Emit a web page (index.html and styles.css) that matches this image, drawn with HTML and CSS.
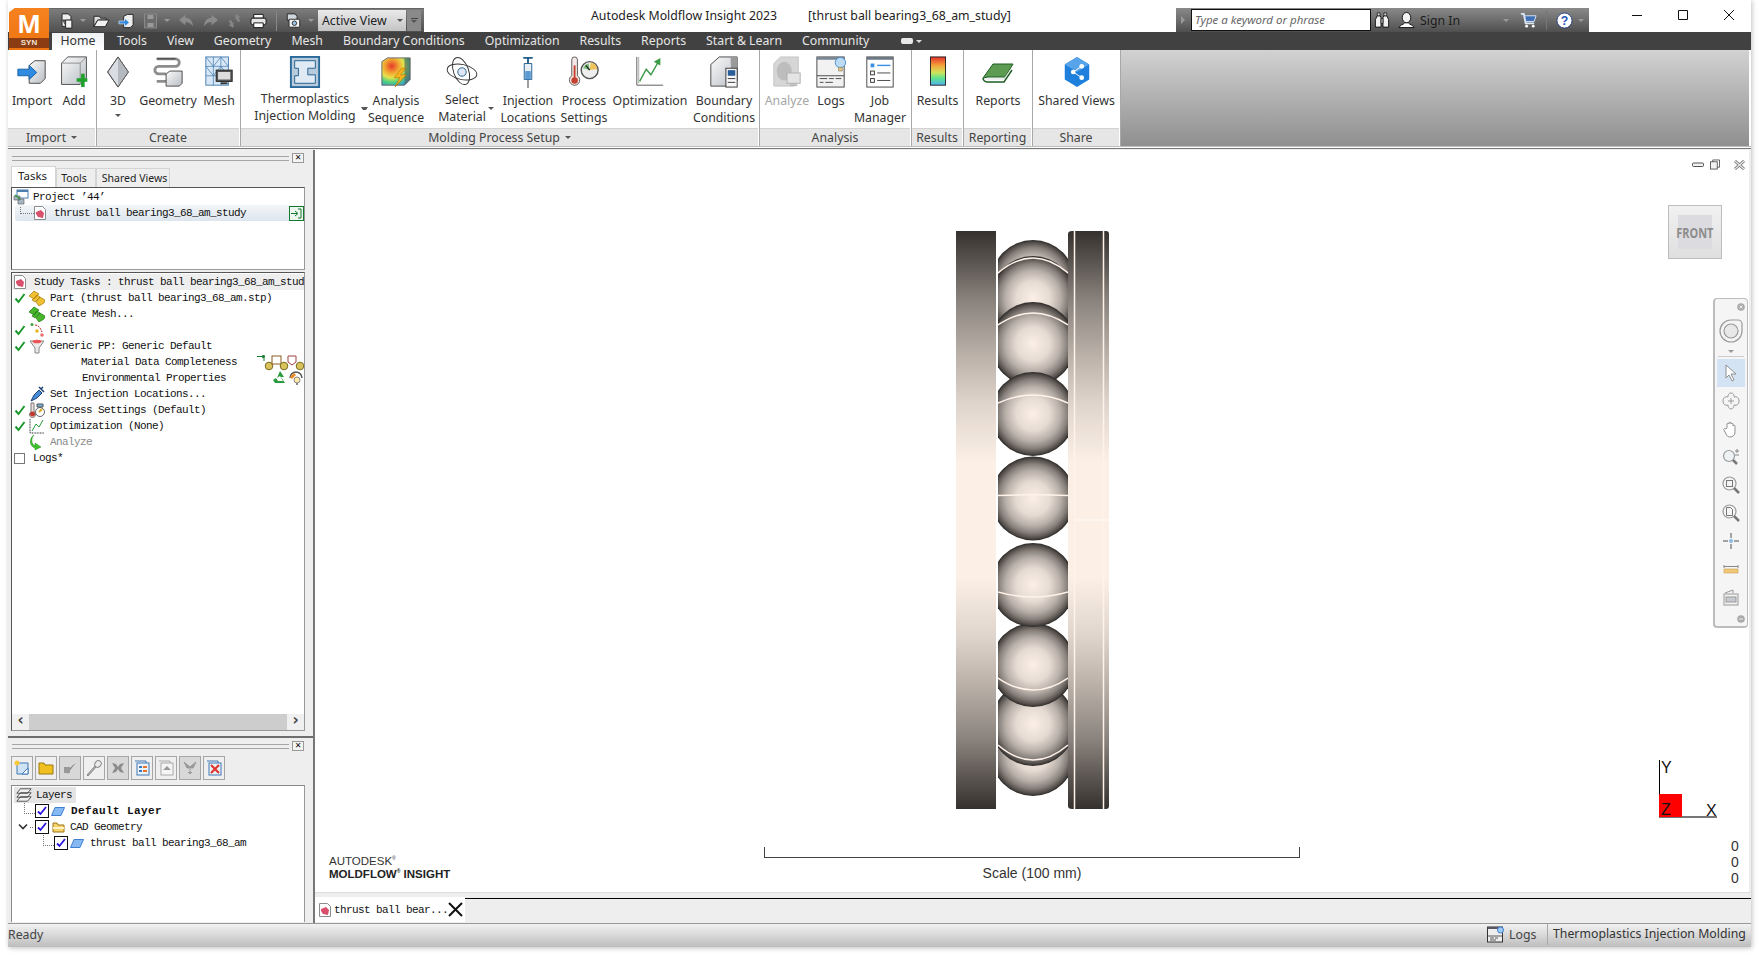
FILE: index.html
```html
<!DOCTYPE html>
<html lang="en">
<head>
<meta charset="utf-8">
<title>Autodesk Moldflow Insight 2023</title>
<link rel="stylesheet" href="styles.css">
</head>
<body>
<svg class="defs" width="0" height="0">
  <defs>
    <linearGradient id="ringGrad" x1="0" y1="0" x2="0" y2="1">
      <stop offset="0" stop-color="#35312e"/><stop offset=".06" stop-color="#5f5955"/><stop offset=".12" stop-color="#8a837d"/><stop offset=".22" stop-color="#bdb3ab"/><stop offset=".3" stop-color="#e0d5cc"/><stop offset=".4" stop-color="#fbefe6"/><stop offset=".6" stop-color="#fbefe6"/><stop offset=".7" stop-color="#e0d5cc"/><stop offset=".78" stop-color="#bdb3ab"/><stop offset=".88" stop-color="#8a837d"/><stop offset=".94" stop-color="#5f5955"/><stop offset="1" stop-color="#35312e"/>
    </linearGradient>
    <radialGradient id="ballGrad">
      <stop offset="0" stop-color="#fbefe8"/><stop offset=".4" stop-color="#e6dbd3"/><stop offset=".65" stop-color="#b9b0a9"/><stop offset=".82" stop-color="#87807b"/><stop offset=".94" stop-color="#534e4a"/><stop offset="1" stop-color="#2a2725"/>
    </radialGradient>
    <clipPath id="ballClip"><rect x="998" y="225" width="70" height="590"/></clipPath>
    <linearGradient id="boxGrad" x1="0" y1="0" x2="1" y2="1"><stop offset="0" stop-color="#fafafa"/><stop offset="1" stop-color="#b9bec4"/></linearGradient>
    <linearGradient id="rainbow" x1="0" y1="0" x2="0" y2="1"><stop offset="0" stop-color="#e5312b"/><stop offset=".3" stop-color="#f2a33a"/><stop offset=".55" stop-color="#cfe35a"/><stop offset=".75" stop-color="#5fe38d"/><stop offset="1" stop-color="#4fb2f0"/></linearGradient>
    <radialGradient id="contour" cx=".35" cy=".3" r=".85"><stop offset="0" stop-color="#e43b2a"/><stop offset=".3" stop-color="#f3a531"/><stop offset=".5" stop-color="#e8e24c"/><stop offset=".7" stop-color="#52d07f"/><stop offset="1" stop-color="#2f8fe0"/></radialGradient>
    <symbol id="doc" viewBox="0 0 12 14"><path d="M.5.5h8l3 3v10H.5z" fill="#fff" stroke="#8c8c8c"/><path d="M2 6l5-2 3 3-1 5-5-1-2-3z" fill="#d8506c"/></symbol>
    <symbol id="chk" viewBox="0 0 12 12"><path d="M1.500 6.500l3 3.500 6-8" fill="none" stroke="#1c9a2f" stroke-width="2"/></symbol>
    <symbol id="lay" viewBox="0 0 14 9"><path d="M4 .5h9.500L10 8.500H.5z" fill="#86b8f2" stroke="#3f7fd0"/></symbol>
    <symbol id="cb" viewBox="0 0 14 14"><rect x=".5" y=".5" width="13" height="13" fill="#fff" stroke="#111"/><path d="M3 7.500l2.500 2.500 5.500-7" fill="none" stroke="#2a12e0" stroke-width="1.800"/></symbol>
  </defs>
</svg>

<div class="window">
  <div class="app-logo"><span class="app-m">M</span><span class="app-syn">SYN</span></div>

  <header class="titlebar">
    <div class="qat">
      <svg class="q q1" viewBox="0 0 16 18"><path d="M3 1h7l3 3v4H3z" fill="#eee" stroke="#222"/><path d="M7 8h7v9H7zM3 8v7h4" fill="#f4f4f4" stroke="#222"/></svg>
      <i class="caret q2"></i>
      <svg class="q q3" viewBox="0 0 18 14"><path d="M1 2h6l1 2h6v2H5L1 13z" fill="#ddd" stroke="#222"/><path d="M5 6h12l-4 7H1z" fill="#f2f2f2" stroke="#222"/></svg>
      <svg class="q q4" viewBox="0 0 18 16"><path d="M6 3l4-2h6v11l-3 3H6z" fill="#eee" stroke="#222"/><path d="M1 8h6V5l5 4.500-5 4.500v-3H1z" fill="#2f86dd" stroke="#fff" stroke-width=".6"/></svg>
      <svg class="q q5" viewBox="0 0 14 16"><path d="M1 1h12v14H1z" fill="#6c6c6c" stroke="#8a8a8a"/><path d="M4 2h6v4H4zM4 10h6v4H4z" fill="#9a9a9a"/></svg>
      <i class="caret q6"></i>
      <svg class="q q7" viewBox="0 0 16 14"><path d="M7 1L1 6l6 5V8c3 0 5 1 7 4 0-5-3-8-7-8z" fill="#8b8b8b"/></svg>
      <svg class="q q8" viewBox="0 0 16 14"><path d="M9 1l6 5-6 5V8C6 8 4 9 2 12c0-5 3-8 7-8z" fill="#8b8b8b"/></svg>
      <svg class="q q9" viewBox="0 0 16 16"><path d="M9 1l5 3-2 1 2 3-3 1-1-3-1 1zM7 15L2 12l2-1-2-3 3-1 1 3 1-1z" fill="#858585"/></svg>
      <svg class="q q10" viewBox="0 0 18 16"><path d="M4 1h10v4H4z" fill="#fff" stroke="#111"/><rect x="1" y="5" width="16" height="7" rx="2" fill="#e6e6e6" stroke="#111"/><path d="M4 10h10v5H4z" fill="#fff" stroke="#111"/></svg>
      <i class="qsep"></i>
      <svg class="q q11" viewBox="0 0 16 18"><path d="M1 1h9l2 3v4H1z" fill="#cfd6dc" stroke="#222"/><rect x="3" y="7" width="12" height="9" rx="1" fill="#f3f3f3" stroke="#222"/><circle cx="9" cy="11.500" r="2.500" fill="#9fc6ea" stroke="#222"/></svg>
      <i class="caret q12"></i>
      <div class="combo"><span>Active View</span><i class="caret dark"></i></div>
      <div class="overflow"><i></i><i class="caret dark"></i></div>
    </div>
    <div class="title"><span>Autodesk Moldflow Insight 2023</span><span>[thrust ball bearing3_68_am_study]</span></div>
    <div class="searchbar">
      <i class="tri"></i>
      <div class="search-input">Type a keyword or phrase</div>
      <svg class="s-bino" viewBox="0 0 16 18"><path d="M3 4h3l1 2v10H1V8zM10 4h3l2 4v8H9V6z" fill="#f2f2f2" stroke="#111"/><path d="M3 1h3v3H3zM10 1h3v3h-3zM7 7h2v5H7z" fill="#ddd" stroke="#111" stroke-width=".8"/></svg>
      <svg class="s-user" viewBox="0 0 18 18"><ellipse cx="9" cy="6.500" rx="4.500" ry="5.500" fill="#f2f2f2" stroke="#111"/><path d="M1 17c1-3 5-3 6-5h4c1 2 5 2 6 5z" fill="#fff" stroke="#111"/></svg>
      <span class="signin">Sign In</span>
      <i class="caret s-c1"></i>
      <svg class="s-cart" viewBox="0 0 18 18"><path d="M1 2h3l2 10h9" fill="none" stroke="#dbe7f5" stroke-width="2"/><path d="M5 4h12l-2 6H6z" fill="#3f70b5" stroke="#dbe7f5"/><circle cx="7" cy="15" r="1.500" fill="#fff"/><circle cx="14" cy="15" r="1.500" fill="#fff"/></svg>
      <i class="s-sep"></i>
      <svg class="s-help" viewBox="0 0 18 18"><circle cx="9" cy="9" r="8" fill="#fff" stroke="#263f7c"/><text x="9" y="13.500" text-anchor="middle" class="help-q">?</text></svg>
      <i class="caret s-c2"></i>
    </div>
    <div class="winbtns">
      <svg viewBox="0 0 12 12"><path d="M1 6.500h10" stroke="#111"/></svg>
      <svg viewBox="0 0 12 12"><path d="M1.500 1.500h9v9h-9z" fill="none" stroke="#111"/></svg>
      <svg viewBox="0 0 12 12"><path d="M1 1l10 10M11 1L1 11" stroke="#111"/></svg>
    </div>
  </header>

  <nav class="tabs">
    <span class="tab active">Home</span>
    <span class="tab">Tools</span>
    <span class="tab">View</span>
    <span class="tab">Geometry</span>
    <span class="tab">Mesh</span>
    <span class="tab">Boundary Conditions</span>
    <span class="tab">Optimization</span>
    <span class="tab">Results</span>
    <span class="tab">Reports</span>
    <span class="tab">Start &amp; Learn</span>
    <span class="tab">Community</span>
    <span class="tab-min"><i></i><i class="caret light"></i></span>
  </nav>

  <section class="ribbon">
    <div class="panel p-import">
      <div class="pbody">
        <div class="rb w48"><svg class="ri" viewBox="0 0 34 32"><path d="M14 9l6-5h11v19l-5 5H14z" fill="url(#boxGrad)" stroke="#444"/><path d="M2 13h12V9l8 7.500-8 7.500v-4H2z" fill="#2f8be0" stroke="#135fa8"/></svg><span>Import</span></div>
        <div class="rb w36"><svg class="ri" viewBox="0 0 30 36"><path d="M1 8l7-7h21v24l-7 7H1z" fill="url(#boxGrad)" stroke="#444"/><path d="M1 8h21v24M22 8l7-7" fill="none" stroke="#888"/><path d="M18 25h5v-5h4v5h3v4h-3v6h-4v-6h-5z" fill="#1ea02c"/></svg><span>Add</span></div>
      </div>
      <div class="plabel">Import <i class="caret dark"></i></div>
    </div>
    <div class="panel p-create">
      <div class="pbody">
        <div class="rb w42"><svg class="ri" viewBox="0 0 26 34"><path d="M13 1l11 16-11 16L2 17z" fill="#d9dde2" stroke="#555"/><path d="M13 1l11 16-11 16z" fill="#b4b9c0"/><path d="M13 1l11 16-11 16L2 17z" fill="none" stroke="#555"/></svg><span>3D</span><i class="caret dark below"></i></div>
        <div class="rb w58"><svg class="ri" viewBox="0 0 32 34"><path d="M4 3h20a3 3 0 0 1 0 8H6a3 3 0 0 0 0 8h8M4 27h10" fill="none" stroke="#8d8d8d" stroke-width="3"/><path d="M4 3h20" fill="none" stroke="#333"/><path d="M14 19l4-3h13v13l-3 3H14z" fill="url(#boxGrad)" stroke="#444"/></svg><span>Geometry</span></div>
        <div class="rb w44"><svg class="ri" viewBox="0 0 30 34"><rect x="1" y="1" width="24" height="30" fill="#d8e8f6" stroke="#4a7fb0"/><path d="M1 11h24M1 21h24M9 1v30M17 1v30M1 1l8 10 8-10 8 10M1 11l8 10 8-10 8 10" fill="none" stroke="#4a7fb0" stroke-width=".8"/><rect x="12" y="15" width="17" height="12" fill="#555" stroke="#222"/><rect x="14" y="17" width="13" height="8" fill="#ddd"/><path d="M17 28h7v2h-7z" fill="#333"/></svg><span>Mesh</span></div>
      </div>
      <div class="plabel">Create</div>
    </div>
    <div class="panel p-mold">
      <div class="pbody">
        <div class="rb w110 up"><svg class="ri" viewBox="0 0 32 34"><rect x="1" y="1" width="30" height="32" fill="#b7cbdd" stroke="#2a6a9a" stroke-width="2"/><path d="M5 5h22v8h-8v7h8v9H5v-8h4v-8H5z" fill="#dfeaf4" stroke="#1f5d8c"/></svg><span>Thermoplastics</span><span>Injection Molding</span></div>
        <i class="caret dark rb-arrow"></i>
        <div class="rb w56"><svg class="ri" viewBox="0 0 32 34"><path d="M1 6l6-4h24v23l-6 6H1z" fill="url(#contour)" stroke="#666"/><path d="M25 2l6 0v23l-6 6z" fill="#555" opacity=".55"/><path d="M22 13l-8 10h6l-5 10 12-13h-6l5-7z" fill="#f7b21d" stroke="#a96c00" stroke-width=".6"/></svg><span>Analysis</span><span>Sequence</span></div>
        <div class="rb w76 has-arrow up1"><svg class="ri" viewBox="0 0 34 34"><ellipse cx="17" cy="17" rx="16" ry="8" transform="rotate(12 17 17)" fill="none" stroke="#333"/><ellipse cx="16" cy="16" rx="8" ry="15" transform="rotate(-20 16 16)" fill="none" stroke="#333"/><circle cx="17" cy="17" r="4.500" fill="#dfe8f2" stroke="#1f5d8c"/></svg><span>Select</span><span>Material</span></div>
        <div class="rb w56"><svg class="ri" viewBox="0 0 16 34"><path d="M3 2h10M8 2v6" stroke="#1f5d8c" stroke-width="2"/><path d="M4 8h8v17H4z" fill="#e7eef5" stroke="#1f5d8c"/><path d="M5 16h6v9H5z" fill="#5b9bd5"/><path d="M8 25v9" stroke="#333"/></svg><span>Injection</span><span>Locations</span></div>
        <div class="rb w56"><svg class="ri" viewBox="0 0 34 34"><path d="M4 4a3 3 0 0 1 6 0v17a5.500 5.500 0 1 1-6 0z" fill="#f4e9e6" stroke="#555"/><circle cx="7" cy="26" r="3.500" fill="#c4402f"/><path d="M6 10h2v14H6z" fill="#c4402f"/><circle cx="23" cy="15" r="9" fill="#eee" stroke="#555" stroke-width="1.500"/><path d="M16 13a8 8 0 0 1 6-5l1 7z" fill="#7cc47c"/><path d="M24 7a8 8 0 0 1 7 7l-8 1z" fill="#eec35c"/><path d="M23 15l-4-5" stroke="#222" stroke-width="1.500"/></svg><span>Process</span><span>Settings</span></div>
        <div class="rb w76"><svg class="ri" viewBox="0 0 30 34"><path d="M1 1v30h28" fill="none" stroke="#555"/><path d="M3 1v28" stroke="#aaa"/><path d="M4 27l7-13 5 6 8-14" fill="none" stroke="#3d9a46" stroke-width="1.500"/><path d="M19 6l7-4 0 8z" fill="#3d9a46"/></svg><span>Optimization</span></div>
        <div class="rb w72"><svg class="ri" viewBox="0 0 30 34"><path d="M1 9l9-8h19v25l-6 6H1z" fill="url(#boxGrad)" stroke="#444"/><path d="M22 1l7 0v25l-6 6z" fill="#9a9a9a"/><rect x="17" y="13" width="12" height="20" fill="#f8f8f8" stroke="#333"/><rect x="19" y="15" width="8" height="6" fill="#2a5f9a"/><path d="M19 24h8M19 28h8" stroke="#333"/></svg><span>Boundary</span><span>Conditions</span></div>
      </div>
      <div class="plabel">Molding Process Setup <i class="caret dark"></i></div>
    </div>
    <div class="panel p-analysis">
      <div class="pbody">
        <div class="rb w54 off"><svg class="ri" viewBox="0 0 30 34"><path d="M1 8l7-7h19v26l-5 5H1z" fill="#d6d6d6" stroke="#c4c4c4"/><ellipse cx="12" cy="16" rx="8" ry="10" fill="#bdbdbd"/><rect x="15" y="18" width="14" height="11" fill="#e4e4e4" stroke="#b0b0b0"/><path d="M18 31h8" stroke="#bbb" stroke-width="2"/></svg><span>Analyze</span></div>
        <div class="rb w34"><svg class="ri" viewBox="0 0 32 34"><rect x="1" y="1" width="29" height="32" fill="#f2f2f2" stroke="#444"/><path d="M1 1h29v3H1z" fill="#7b8794"/><path d="M1 21h29" stroke="#444"/><path d="M4 24h8M14 24h5M21 24h6M4 28h4M10 28h8" stroke="#444"/><circle cx="26" cy="7" r="5.500" fill="#bcdcf6" stroke="#4a8bcb"/><path d="M24 12h4v4h-4z" fill="#e8c877" stroke="#666" stroke-width=".5"/></svg><span>Logs</span></div>
        <div class="rb w64"><svg class="ri" viewBox="0 0 30 34"><rect x="1" y="1" width="28" height="32" fill="#fff" stroke="#444"/><path d="M1 1h28v3H1z" fill="#6d7884"/><rect x="5" y="8" width="4" height="4" fill="#3a8fe6"/><path d="M12 10h14" stroke="#3a8fe6" stroke-width="1.500"/><rect x="5" y="16" width="4" height="4" fill="#fff" stroke="#333"/><path d="M12 18h14" stroke="#444"/><rect x="5" y="24" width="4" height="4" fill="#fff" stroke="#333"/><path d="M12 26h14" stroke="#444"/></svg><span>Job</span><span>Manager</span></div>
      </div>
      <div class="plabel">Analysis</div>
    </div>
    <div class="panel p-results">
      <div class="pbody">
        <div class="rb wfull"><svg class="ri" viewBox="0 0 18 34"><rect x="1" y="1" width="16" height="30" fill="url(#rainbow)" stroke="#222"/></svg><span>Results</span></div>
      </div>
      <div class="plabel">Results</div>
    </div>
    <div class="panel p-reporting">
      <div class="pbody">
        <div class="rb wfull"><svg class="ri" viewBox="0 0 32 32"><path d="M1 22L11 8h20l-8 13H6z" fill="#5d9a52" stroke="#1e5e22"/><path d="M1 22c0 2 2 4 4 4h17l8-12" fill="none" stroke="#1e5e22" stroke-width="1.500"/><path d="M5 23h17l7-10" fill="none" stroke="#ddd"/></svg><span>Reports</span></div>
      </div>
      <div class="plabel">Reporting</div>
    </div>
    <div class="panel p-share">
      <div class="pbody">
        <div class="rb wfull"><svg class="ri" viewBox="0 0 30 34"><path d="M15 1l13 8v16l-13 8-13-8V9z" fill="#1e7fdc"/><path d="M15 1l13 8-13 8-13-8z" fill="#57a4ea"/><circle cx="20" cy="11" r="2.500" fill="#fff"/><circle cx="11" cy="17" r="2.500" fill="#fff"/><circle cx="20" cy="23" r="2.500" fill="#fff"/><path d="M20 11l-9 6 9 6" fill="none" stroke="#fff"/></svg><span>Shared Views</span></div>
      </div>
      <div class="plabel">Share</div>
    </div>
    <div class="ribbon-rest"></div>
  </section>
  <div class="ribbon-foot"></div>

  <main class="main">
    <aside class="left">
      <section class="dock dock-top">
        <div class="handle"><i class="grip"></i><b class="closex">✕</b></div>
        <div class="dtabs"><span class="dtab on">Tasks</span><span class="dtab d2">Tools</span><span class="dtab d3">Shared Views</span></div>
        <div class="tree project">
          <div class="row r-proj">
            <svg class="ic16" viewBox="0 0 16 16"><rect x="4" y="1" width="11" height="8" fill="#fff" stroke="#4a7fb0"/><path d="M4 1h11v2H4z" fill="#4a7fb0"/><path d="M1 7h6v4H1zM5 10h6v5H5z" fill="#a9b7c4" stroke="#555" stroke-width=".6"/><path d="M2 6l5 4" stroke="#2d9a3a" stroke-width="1.500"/></svg>
            <span>Project ’44’</span>
          </div>
          <div class="row r-study">
            <i class="dots"></i>
            <svg class="doc" width="12" height="14"><use href="#doc"/></svg>
            <span>thrust ball bearing3_68_am_study</span>
            <svg class="endico" viewBox="0 0 15 15"><rect x=".5" y=".5" width="14" height="14" fill="#eef6ef" stroke="#137a2d"/><path d="M2 7.500h6M6 5l3 2.500L6 10" fill="none" stroke="#137a2d"/><path d="M9 3h3v9H9" fill="none" stroke="#137a2d"/></svg>
          </div>
        </div>
        <div class="tree tasks">
          <div class="row r-head">
            <svg class="doc" width="12" height="14"><use href="#doc"/></svg>
            <span>Study Tasks : thrust ball bearing3_68_am_stud</span>
          </div>
          <div class="row t"><svg class="ck"><use href="#chk"/></svg><svg class="ic16" viewBox="0 0 16 16"><path d="M0 6l5-5 5 3-5 5zM3 10l5-5 3 2-5 5zM7 12l4-5 5 3-1 3-5 3z" fill="#f0c030" stroke="#a87d10" stroke-width=".7"/></svg><span>Part (thrust ball bearing3_68_am.stp)</span></div>
          <div class="row t"><i class="ck"></i><svg class="ic16" viewBox="0 0 16 16"><path d="M0 6l5-5 5 3-5 5zM3 10l5-5 3 2-5 5zM7 12l4-5 5 3-1 3-5 3z" fill="#49b52c" stroke="#1f7a14" stroke-width=".7"/></svg><span>Create Mesh...</span></div>
          <div class="row t"><svg class="ck"><use href="#chk"/></svg><svg class="ic16" viewBox="0 0 16 16"><circle cx="3" cy="2.500" r="1.500" fill="#39a23a"/><path d="M6 3c3 0 5 2 7 7" fill="none" stroke="#c21f1f" stroke-dasharray="2 1"/><circle cx="8" cy="9" r="1.800" fill="#e8b820"/><circle cx="13" cy="13" r="1.800" fill="#e87070"/></svg><span>Fill</span></div>
          <div class="row t"><svg class="ck"><use href="#chk"/></svg><svg class="ic16" viewBox="0 0 16 16"><path d="M1 3h14l-5 7v5H6v-5z" fill="#eaeaea" stroke="#888"/><ellipse cx="8" cy="3.500" rx="4.500" ry="1.800" fill="#e55"/></svg><span>Generic PP: Generic Default</span></div>
          <div class="row t2"><span>Material Data Completeness</span>
            <svg class="mat" viewBox="0 0 48 16"><path d="M1 1.500h8M6 0l3 1.500L6 3M8 6V0" fill="none" stroke="#137a2d"/><circle cx="13" cy="11" r="3.800" fill="#d8c25a" stroke="#7a6a20"/><rect x="16" y="1" width="9" height="8" fill="#fff" stroke="#8a5a20"/><circle cx="28" cy="11" r="3.800" fill="#d8c25a" stroke="#7a6a20"/><path d="M32 1h8v6l-4 3-4-3z" fill="#fff" stroke="#a04040"/><circle cx="44" cy="11" r="3.800" fill="#d8c25a" stroke="#7a6a20"/></svg></div>
          <div class="row t2 env"><span>Environmental Properties</span>
            <svg class="envi" viewBox="0 0 32 16"><path d="M8 1l4 6H9l4 6H3l-2-3 3-2 2 3h5L8 6 5 8z" fill="#2a9a3e"/><path d="M18 8a6 6 0 0 1 12 0" fill="none" stroke="#555" stroke-width="1.500"/><path d="M18 7l4-4 2 2-4 4z" fill="#ef8a1f"/><circle cx="25" cy="10" r="3" fill="#ffe9a8" stroke="#888"/><path d="M24 13h2v2h-2z" fill="#888"/></svg></div>
          <div class="row t"><i class="ck"></i><svg class="ic16" viewBox="0 0 16 16"><path d="M2 15l3-6 5-5 3 3-5 5z" fill="#4a8bd6" stroke="#1c3f78"/><path d="M10 1l5 5M12 3l2-2" stroke="#1c3f78" stroke-width="1.500"/></svg><span>Set Injection Locations...</span></div>
          <div class="row t"><svg class="ck"><use href="#chk"/></svg><svg class="ic16" viewBox="0 0 16 16"><path d="M2 1h3v9a3 3 0 1 1-3 0z" fill="#f0e0dc" stroke="#777"/><circle cx="3.500" cy="12" r="2.500" fill="#c03a30"/><circle cx="11" cy="10" r="4.500" fill="#fff" stroke="#666"/><path d="M8 2h6v3H8z" fill="#7cb0d8" stroke="#555"/><path d="M10 10l3-3" stroke="#d8a820" stroke-width="2"/></svg><span>Process Settings (Default)</span></div>
          <div class="row t"><svg class="ck"><use href="#chk"/></svg><svg class="ic16" viewBox="0 0 16 16"><path d="M1 1v14h14" fill="none" stroke="#333" stroke-dasharray="1 .6"/><path d="M3 13l4-7 3 3 4-7" fill="none" stroke="#2a9a3e"/></svg><span>Optimization (None)</span></div>
          <div class="row t dim"><i class="ck"></i><svg class="ic16" viewBox="0 0 16 16"><path d="M5 1C2 4 2 10 6 12V9l6 4-6 3v-2C0 12 0 4 5 1z" fill="#3ec22c" stroke="#1f8a18" stroke-width=".5"/></svg><span>Analyze</span></div>
          <div class="row r-logs"><i class="box"></i><span>Logs*</span></div>
          <div class="tree-fill"></div>
          <div class="hscroll"><b class="sarrow">‹</b><i class="thumb"></i><b class="sarrow">›</b></div>
        </div>
      </section>
      <section class="dock dock-bottom">
        <div class="handle"><i class="grip"></i><b class="closex">✕</b></div>
        <div class="ltools">
          <span class="lt"><svg viewBox="0 0 16 16"><path d="M3 3h11v11H3z" fill="#cfe2f5" stroke="#3f78b5"/><path d="M8 14l6-6v6z" fill="#fff" stroke="#3f78b5"/><circle cx="3" cy="3" r="2.500" fill="#f6c83a"/></svg></span>
          <span class="lt"><svg viewBox="0 0 16 16"><path d="M1 3h5l1 2h8v9H1z" fill="#f0c020" stroke="#9a7a10"/></svg></span>
          <span class="lt g"><svg viewBox="0 0 16 16"><path d="M3 8l3 6c2-4 5-8 8-11-4 2-6 5-8 8z" fill="#888"/><path d="M2 7h6v6H2z" fill="#999"/></svg></span>
          <span class="lt"><svg viewBox="0 0 16 16"><path d="M1 15l8-9 1 1-8 9z" fill="#b5b5b5" stroke="#888"/><ellipse cx="12" cy="4" rx="3" ry="3.500" transform="rotate(40 12 4)" fill="#ececec" stroke="#888"/></svg></span>
          <span class="lt g"><svg viewBox="0 0 16 16"><path d="M2 3l4 1 2 3 2-3 4-1-3 5 3 5-4-1-2-3-2 3-4 1 3-5z" fill="#8c8c8c"/></svg></span>
          <span class="lt"><svg viewBox="0 0 16 16"><rect x="3" y="3" width="12" height="12" fill="#eaf2fb" stroke="#3f78b5"/><path d="M1 1h11v2" fill="none" stroke="#3f78b5"/><path d="M5 6h3v2H5zM5 10h3v2H5z" fill="#3f78b5"/><path d="M9 6h4v2H9zM9 10h4v2H9z" fill="#e7742a"/></svg></span>
          <span class="lt"><svg viewBox="0 0 16 16"><rect x="3" y="3" width="12" height="12" fill="#f5f5f5" stroke="#aaa"/><path d="M1 1h11v2" fill="none" stroke="#aaa"/><path d="M9 6l4 4H5z" fill="#999"/></svg></span>
          <span class="lt g"><svg viewBox="0 0 16 16"><path d="M2 2l6 5 6-5-3 6H5zM8 9v5M6 12l2 2 2-2" fill="#999" stroke="#999"/></svg></span>
          <span class="lt"><svg viewBox="0 0 16 16"><rect x="3" y="3" width="12" height="12" fill="#eaf2fb" stroke="#3f78b5"/><path d="M1 1h11v2" fill="none" stroke="#3f78b5"/><path d="M5 5l8 8M13 5l-8 8" stroke="#e0352a" stroke-width="2.200"/></svg></span>
        </div>
        <div class="tree layers">
          <div class="row l-root"><span class="root-wrap"><svg class="ic16" viewBox="0 0 18 16"><path d="M5 1h12l-4 5H1zM5 5.500h12l-4 5H1zM5 10h12l-4 5H1z" fill="#eee" stroke="#222" stroke-width=".8"/></svg><span>Layers</span></span></div>
          <div class="row l1"><i class="dots-l"></i><svg class="cb"><use href="#cb"/></svg><svg class="lay"><use href="#lay"/></svg><strong>Default Layer</strong></div>
          <div class="row l2"><svg class="chev" viewBox="0 0 10 8"><path d="M1 1.500l4 4 4-4" fill="none" stroke="#333" stroke-width="1.600"/></svg><i class="dots-s"></i><svg class="cb"><use href="#cb"/></svg><svg class="fold" viewBox="0 0 13 12"><path d="M1 2h4l1 2h6v7H1z" fill="#f6d36a" stroke="#9c7414"/><path d="M1 6h11v2H1z" fill="#fff3c4"/></svg><span>CAD Geometry</span></div>
          <div class="row l3"><i class="dots-l"></i><svg class="cb"><use href="#cb"/></svg><svg class="lay"><use href="#lay"/></svg><span>thrust ball bearing3_68_am</span></div>
        </div>
      </section>
    </aside>

    <section class="view">
      <div class="canvas">
        <div class="vp-ctl">
          <svg viewBox="0 0 12 6" class="c1"><rect x=".5" y="1" width="11" height="3.500" rx="1" fill="#f2f2f2" stroke="#555"/></svg>
          <svg viewBox="0 0 11 12" class="c2"><rect x=".5" y="3" width="7.500" height="8" fill="#f2f2f2" stroke="#555"/><path d="M3 3V1h7.500v8H8" fill="none" stroke="#555"/></svg>
          <svg viewBox="0 0 12 11" class="c3"><path d="M1 1l10 9M11 1L1 10" stroke="#666" stroke-width="3"/><path d="M1 1l10 9M11 1L1 10" stroke="#eee" stroke-width="1.400"/></svg>
        </div>
        <div class="cube"><div class="cube-face"><span>FRONT</span></div></div>

        <nav class="navbar">
          <svg class="nv-x" viewBox="0 0 8 8"><circle cx="4" cy="4" r="3.800" fill="#aaa"/><path d="M2.500 2.500l3 3M5.500 2.500l-3 3" stroke="#eee"/></svg>
          <svg class="nv-wheel" viewBox="0 0 24 24"><path d="M12 1h7a4 4 0 0 1 4 4v7a11 11 0 1 1-11-11z" fill="#f4f4f4" stroke="#9a9a9a" stroke-width="1.200"/><circle cx="12" cy="12" r="7" fill="#e8e8e8" stroke="#999" stroke-width="1.200"/></svg>
          <i class="caret nv-c"></i>
          <i class="nv-sep"></i>
          <span class="nv sel"><svg viewBox="0 0 16 18"><path d="M3 1v13l3-3 3 6 2-1-3-6h5z" fill="#fff" stroke="#8f8f8f"/></svg></span>
          <span class="nv"><svg viewBox="0 0 18 18"><path d="M9 1c3 0 3 3 3 4 3-1 5 1 5 4s-2 5-5 4c0 2-1 4-3 4s-3-2-3-4c-3 1-5-1-5-4s2-5 5-4c0-1 0-4 3-4z" fill="none" stroke="#9a9a9a"/><path d="M6 9h6M9 6v6" stroke="#9a9a9a"/></svg></span>
          <span class="nv"><svg viewBox="0 0 18 18"><path d="M5 8V4c0-1 2-1 2 0V3c0-1 2-1 2 0v1c0-1 2-1 2 0v2c0-1 2-1 2 0v6c0 3-2 5-5 5-2 0-3-1-4-3L2 10c-1-1 1-2 2-1z" fill="#fff" stroke="#8f8f8f"/></svg></span>
          <span class="nv"><svg viewBox="0 0 18 18"><circle cx="7" cy="8" r="5.500" fill="#eef2f5" stroke="#9a9a9a" stroke-width="1.200"/><path d="M11 12l4 4" stroke="#777" stroke-width="2.500"/><path d="M13 3h4M15 1v4M13 7h4" stroke="#888"/></svg></span>
          <span class="nv"><svg viewBox="0 0 18 18"><circle cx="7.500" cy="7.500" r="6.500" fill="#f4f4f4" stroke="#9a9a9a" stroke-width="1.200"/><rect x="4.500" y="4.500" width="6" height="6" fill="none" stroke="#777"/><path d="M12 12l5 5" stroke="#777" stroke-width="2.500"/></svg></span>
          <span class="nv"><svg viewBox="0 0 18 18"><circle cx="7.500" cy="7.500" r="6.500" fill="#f4f4f4" stroke="#9a9a9a" stroke-width="1.200"/><path d="M4.500 3.500h4l2 2v6h-6z" fill="none" stroke="#777"/><path d="M12 12l5 5" stroke="#777" stroke-width="2.500"/></svg></span>
          <span class="nv"><svg viewBox="0 0 18 18"><path d="M1 9h5M12 9h5M9 1v5M9 12v5" stroke="#888" stroke-width="1.500"/><circle cx="9" cy="9" r="2" fill="#8cb8e4"/></svg></span>
          <span class="nv"><svg viewBox="0 0 18 18"><path d="M2 5v3M16 5v3M2 6.500h14" stroke="#888"/><rect x="2" y="9" width="14" height="4" fill="#f0c878" stroke="#c9a050" stroke-width=".6"/></svg></span>
          <span class="nv"><svg viewBox="0 0 18 18"><rect x="2" y="6" width="14" height="11" fill="#f2f2f2" stroke="#999"/><rect x="4" y="9" width="10" height="5" fill="#c8cad2" stroke="#999"/><path d="M3 5l8-3v3" fill="none" stroke="#999"/></svg></span>
          <i class="nv-fill"></i>
          <svg class="nv-x" viewBox="0 0 8 8"><circle cx="4" cy="4" r="3.800" fill="#aaa"/><path d="M2 4h4" stroke="#eee"/></svg>
        </nav>

        <svg class="bearing" viewBox="950 225 170 590" width="170" height="590">
          <rect x="956" y="231" width="40" height="578" fill="url(#ringGrad)"/>
          <g clip-path="url(#ballClip)">
            <circle cx="1033" cy="282" r="42" fill="url(#ballGrad)"/>
            <circle cx="1033" cy="298" r="42" fill="url(#ballGrad)"/>
            <path d="M998 273Q1033 243 1068 273" fill="none" stroke="#fff2e9" stroke-width="1.500"/>
            <circle cx="1033" cy="344" r="42" fill="url(#ballGrad)"/>
            <path d="M998 325Q1033 301 1068 325" fill="none" stroke="#fff2e9" stroke-width="1.500"/>
            <circle cx="1033" cy="414" r="42" fill="url(#ballGrad)"/>
            <path d="M998 403Q1033 387 1068 403" fill="none" stroke="#fff2e9" stroke-width="1.500"/>
            <circle cx="1033" cy="498.500" r="42" fill="url(#ballGrad)"/>
            <path d="M998 495.500Q1033 494 1068 495.500" fill="none" stroke="#fff2e9" stroke-width="1.500"/>
            <circle cx="1033" cy="754" r="42" fill="url(#ballGrad)"/>
            <circle cx="1033" cy="724" r="42" fill="url(#ballGrad)"/>
            <path d="M998 745Q1033 775 1068 745" fill="none" stroke="#fff2e9" stroke-width="1.500"/>
            <circle cx="1033" cy="665" r="42" fill="url(#ballGrad)"/>
            <path d="M998 678Q1033 702 1068 678" fill="none" stroke="#fff2e9" stroke-width="1.500"/>
            <circle cx="1033" cy="585" r="42" fill="url(#ballGrad)"/>
            <path d="M998 592Q1033 602 1068 592" fill="none" stroke="#fff2e9" stroke-width="1.500"/>
          </g>
          <path d="M1072 231h34q3 0 3 3v572q0 3-3 3h-34q-4 0-4-3V234q0-3 4-3z" fill="url(#ringGrad)"/>
          <path d="M1074.500 231v578M1103.500 231v578" stroke="#fff2e9" stroke-width="1.500"/>
          <path d="M1075 520h34" stroke="#fff" stroke-width=".8"/>
        </svg>

        <div class="scale"><i class="bracket"></i><span>Scale (100 mm)</span></div>

        <div class="brand"><span>AUTODESK<sup>®</sup></span><strong>MOLDFLOW<sup>®</sup> INSIGHT</strong></div>

        <div class="axes">
          <i class="ax-y"></i><i class="ax-x"></i><i class="ax-red"></i>
          <span class="a-y">Y</span><span class="a-z">Z</span><span class="a-x">X</span>
        </div>
        <div class="zeros"><span>0</span><span>0</span><span>0</span></div>
      </div>
      <div class="strip">
        <div class="doc-tab">
          <svg class="doc" width="12" height="14"><use href="#doc"/></svg>
          <span>thrust ball bear...</span>
          <svg class="tabx" viewBox="0 0 15 15"><path d="M1 1l13 13M14 1L1 14" stroke="#111" stroke-width="2"/></svg>
        </div>
        <div class="strip-rest"></div>
      </div>
    </section>
  </main>

  <footer class="status">
    <span class="ready">Ready</span>
    <svg class="st-log" viewBox="0 0 17 17"><rect x=".5" y="1" width="15" height="15" fill="#eee" stroke="#333"/><path d="M.5 1h13v2H.5z" fill="#556"/><path d="M.5 10h15M3 12h4M8 12h3M3 14h6" stroke="#333" stroke-width=".8"/><circle cx="13.500" cy="4" r="3" fill="#9fcdf5" stroke="#3f7fd0"/></svg>
    <span class="st-logs">Logs</span>
    <span class="st-mode">Thermoplastics Injection Molding</span>
  </footer>
</div>
</body>
</html>
```

FILE: styles.css
```css
* { box-sizing: border-box; }
html, body { margin: 0; height: 100%; background: #fff; overflow: hidden; }
body { font-family: "Noto Sans", "Open Sans", sans-serif; font-size: 12.300px; color: #333; }
.defs { position: absolute; }
i { display: block; font-style: normal; }
svg { display: block; flex: none; }

.window { position: relative; width: 1743px; height: 947px; margin-left: 8px; display: flex; flex-direction: column; box-shadow: 1px 1px 5px rgba(0,0,0,.25); background: #eee; }

.caret { width: 0; height: 0; border-left: 3px solid transparent; border-right: 3px solid transparent; border-top: 3px solid #9a9a9a; flex: none; }
.caret.dark { border-top-color: #555; }
.caret.light { border-top-color: #ddd; }

/* App logo overlaps title bar and tabs */
.app-logo { position: absolute; left: 1px; top: 8px; width: 40px; height: 42px; z-index: 3; background: linear-gradient(#f58220, #ee7410); display: flex; flex-direction: column; align-items: center; clip-path: polygon(14% 0, 100% 0, 100% 100%, 0 100%, 0 10%); }
.app-m { font: 700 25px/30px "Open Sans", sans-serif; color: #fff; height: 30px; }
.app-syn { width: 100%; height: 10px; background: #8b3c12; color: #f3e4d4; font: 700 8px/10px "Liberation Sans", sans-serif; text-align: center; }

/* Title bar */
.titlebar { height: 32px; display: flex; align-items: flex-end; background: #fff; }
.qat { margin-left: 41px; width: 375px; height: 24px; display: flex; align-items: center; background: linear-gradient(#7c7c7c, #4f4f4f); border-top: 1px solid #666; padding-left: 9px; }
.q { height: 16px; width: 17px; }
.q2 { margin-left: 5px; }
.q3 { margin-left: 7px; }
.q4 { margin-left: 8px; }
.q5 { margin-left: 7px; }
.q6 { margin-left: 5px; }
.q7 { margin-left: 8px; }
.q8 { margin-left: 7px; }
.q9 { margin-left: 7px; }
.q10 { margin-left: 7px; }
.qsep { width: 1px; height: 20px; background: #888; margin-left: 9px; }
.q11 { margin-left: 8px; }
.q12 { margin-left: 6px; }
.combo { margin-left: 4px; width: 88px; height: 21px; background: linear-gradient(#eaeaea, #c4c4c4); color: #222; display: flex; align-items: center; justify-content: space-between; padding: 0 3px 0 4px; }
.overflow { width: 14px; height: 21px; margin-left: 1px; background: #8a8a8a; display: flex; flex-direction: column; align-items: center; justify-content: center; gap: 1px; }
.overflow i:first-child { width: 7px; height: 1px; background: #444; }

.title { flex: 1; align-self: stretch; padding: 7px 0 0 167px; display: flex; gap: 31px; color: #222; line-height: 18px; white-space: nowrap; }
.searchbar { width: 413px; height: 24px; display: flex; align-items: center; background: linear-gradient(#8a8a8a, #4f4f4f); position: relative; padding-left: 5px; }
.tri { width: 0; height: 0; border-left: 4px solid #999; border-top: 4px solid transparent; border-bottom: 4px solid transparent; }
.search-input { margin-left: 6px; width: 180px; height: 22px; background: #fff; border: 1px solid #111; font-style: italic; color: #666; font-size: 11.500px; line-height: 19px; padding-left: 3px; white-space: nowrap; }
.s-bino { width: 16px; height: 17px; margin-left: 3px; }
.s-user { width: 17px; height: 18px; margin-left: 8px; }
.signin { margin-left: 5px; color: #1c1c1c; width: 60px; }
.s-c1 { margin-left: 23px; }
.s-cart { width: 17px; height: 17px; margin-left: 11px; }
.s-sep { width: 1px; height: 20px; background: #777; margin-left: 9px; }
.s-help { width: 17px; height: 17px; margin-left: 9px; }
.help-q { font: 700 13px "Liberation Sans", sans-serif; fill: #1d55b8; }
.s-c2 { margin-left: 5px; }
.winbtns { width: 162px; align-self: stretch; display: flex; padding-left: 25px; }
.winbtns svg { width: 46px; padding: 9px 17px 11px; height: 32px; overflow: visible; }

/* Tabs */
.tabs { height: 18px; background: #414141; display: flex; padding-left: 44px; gap: 20px; align-items: stretch; line-height: 17px; }
.tab { color: #e6e6e6; white-space: nowrap; }
.tab.active { width: 52px; margin-right: -7px; margin-top: 1px; line-height: 16px; text-align: center; color: #333; background: linear-gradient(#eef1f3, #fff); }
.tab-min { display: flex; align-items: center; gap: 3px; margin-left: 12px; }
.tab-min i:first-child { width: 12px; height: 6px; background: #e8e8e8; border-radius: 2px; }

/* Ribbon */
.ribbon { height: 96px; display: flex; padding-right: 2px; background: #fff; }
.panel { display: flex; flex-direction: column; border-right: 1px solid #a8a8a8; flex: none; padding-top: 1px; }
.p-import { width: 89px; }
.p-create { width: 144px; }
.p-mold { width: 519px; }
.p-analysis { width: 152px; }
.p-results { width: 52px; }
.p-reporting { width: 69px; }
.p-share { width: 88px; }
.pbody { flex: 1; display: flex; }
.p-mold .pbody { padding-left: 9px; }
.plabel { height: 18px; background: #e6e6e6; margin: 0 1px 0 0; border-top: 1px solid #d2d2d2; text-align: center; padding-bottom: 1px; color: #444; display: flex; justify-content: center; align-items: center; gap: 5px; }
.rb { position: relative; display: flex; flex-direction: column; align-items: center; flex: none; padding-top: 41px; line-height: 17px; color: #333; white-space: nowrap; }
.rb .ri { position: absolute; top: 5px; left: 50%; transform: translateX(-50%); height: 32px; width: 32px; }
.rb.up { padding-top: 39px; }
.rb.up1 { padding-top: 40px; }
.rb.off { color: #a6a6a6; }
.below { margin-top: 5px; }
.rb-arrow { margin-top: 56px; margin-left: 1px; width: 7px; border-left-width: 2px; border-right-width: 2px; }
.has-arrow::after { content: ""; position: absolute; left: 64px; top: 56px; border: 3px solid transparent; border-top-color: #555; }
.w34 { width: 34px; } .w36 { width: 36px; } .w42 { width: 42px; } .w44 { width: 44px; } .w48 { width: 48px; }
.w54 { width: 54px; } .w56 { width: 56px; } .w58 { width: 58px; } .w64 { width: 64px; } .w72 { width: 72px; }
.w76 { width: 76px; } .w110 { width: 110px; } .wfull { width: 100%; }
.ribbon-rest { flex: 1; background: linear-gradient(#d2d2d2, #8f8f8f); }
.ribbon-foot { height: 4px; background: linear-gradient(#bdbdbd 0 1px, #fff 1px 2px, #777 2px 3px, #eee 3px); }

/* Main */
.main { height: 773px; display: flex; }
.left { width: 307px; display: flex; flex-direction: column; background: #eee; border-right: 2px solid #777; }
.dock { padding: 0 8px 0 3px; display: flex; flex-direction: column; }
.dock-top { height: 586px; }
.dock-bottom { flex: 1; border-top: 2px solid #6e6e6e; }
.handle { height: 14px; display: flex; align-items: center; padding: 2px 0 0 1px; }
.grip { flex: 1; height: 5px; border-top: 1px solid #a5a5a5; border-bottom: 1px solid #a5a5a5; margin-right: 3px; }
.closex { width: 12px; height: 10px; border: 1px solid #999; background: #f4f4f4; font: 700 8px/8px "DejaVu Sans", sans-serif; text-align: center; color: #111; margin-right: 1px; }
.dtabs { display: flex; height: 21px; margin-top: 2px; align-items: flex-end; font-size: 10.500px; color: #222; }
.dtab { width: 40px; height: 19px; line-height: 18px; text-align: center; background: #eee; border: 1px solid #d4d4d4; border-bottom: 0; white-space: nowrap; }
.dtab.d2 { padding-right: 4px; }
.dtab.d3 { width: 74px; padding-left: 3px; }
.dtab.on { width: 45px; height: 21px; padding-right: 2px; background: #fff; font-size: 11.500px; }
.tree { background: #fff; border: 1px solid #999; border-left-color: #555; border-top-color: #555; font: 11px/16px "Liberation Mono", monospace; letter-spacing: -.6px; color: #111; white-space: nowrap; }
.project { height: 83px; padding-top: 1px; }
.tasks { margin-top: 2px; flex: 1; display: flex; flex-direction: column; padding-top: 1px; margin-bottom: 5px; overflow: hidden; }
.row { height: 16px; display: flex; align-items: center; }
.ic16 { width: 16px; height: 16px; }
.r-proj { padding-left: 1px; gap: 4px; }
.r-study { margin: 0 0 0 3px; padding-left: 5px; background: linear-gradient(#f2f5f8, #dde5ee); border-radius: 3px 0 0 3px; position: relative; }
.dots { width: 14px; height: 7px; border-left: 1px dotted #777; border-bottom: 1px dotted #777; margin-top: -6px; }
.doc { width: 12px; height: 14px; }
.r-study span { margin-left: 8px; flex: 1; }
.endico { width: 15px; height: 15px; }
.r-head { background: #eee; padding-left: 2px; gap: 8px; }
.t { padding-left: 2px; }
.ck { width: 12px; height: 12px; margin-right: 3px; }
.t span { margin-left: 5px; }
.t2 { padding-left: 69px; justify-content: space-between; }
.env span { margin-left: 1px; }
.mat { width: 48px; height: 16px; margin-top: 2px; }
.envi { width: 32px; height: 16px; }
.dim { color: #8a8a8a; }
.r-logs { padding-left: 2px; gap: 8px; }
.box { width: 11px; height: 11px; border: 1px solid #777; }
.tree-fill { flex: 1; }
.hscroll { height: 16px; display: flex; align-items: stretch; background: #f0f0f0; }
.sarrow { width: 17px; font: 700 15px/13px "DejaVu Sans", sans-serif; text-align: center; color: #444; letter-spacing: 0; }
.thumb { flex: 1; background: #cdcdcd; }

.ltools { display: flex; gap: 2px; margin-top: 4px; height: 24px; }
.lt { width: 22px; height: 24px; border: 1px solid #a6a6a6; background: #efefef; display: flex; align-items: center; justify-content: center; }
.lt.g { background: #d8d8d8; }
.lt svg { width: 16px; height: 16px; }
.layers { margin-top: 5px; flex: 1; padding: 1px 0 0 2px; margin-bottom: 1px; border-left-color: #888; border-top-color: #888; border-bottom: 0; }
.root-wrap { display: flex; align-items: center; gap: 4px; background: #e4e4e4; padding: 0 4px 0 2px; height: 16px; }
.dots-l { width: 11px; height: 11px; border-left: 1px dotted #777; border-bottom: 1px dotted #777; margin: -6px 0 0 10px; }
.cb { width: 14px; height: 14px; }
.lay { width: 14px; height: 9px; margin: 0 6px 0 2px; }
.fold { width: 13px; height: 12px; margin: 0 5px 0 3px; }
.l2 .chev { width: 10px; height: 8px; margin: 0 0 0 4px; }
.dots-s { width: 3px; border-bottom: 1px dotted #777; margin: 0 2px; }
.l3 { padding-left: 19px; }
.l1 strong { font-weight: 700; letter-spacing: .4px; }

/* Viewport */
.view { flex: 1; display: flex; flex-direction: column; }
.canvas { position: relative; height: 742px; background: #fff; margin-right: 2px; overflow: hidden; }
.vp-ctl { position: absolute; right: 4px; top: 9px; display: flex; gap: 6px; align-items: center; }
.vp-ctl .c1 { width: 12px; height: 6px; }
.vp-ctl .c2 { width: 10px; height: 11px; margin-right: 8px; }
.vp-ctl .c3 { width: 11px; height: 10px; }
.cube { position: absolute; left: 1353px; top: 55px; width: 54px; height: 54px; border: 1px solid #bdbdbd; background: linear-gradient(#f1f1f1, #dfdfdf); display: flex; align-items: center; justify-content: center; }
.cube-face { width: 34px; height: 34px; background: #dcdce0; display: flex; align-items: center; justify-content: center; font: 700 14px "Open Sans", sans-serif; color: #8c8c8c; white-space: nowrap; }
.cube-face span { transform: scaleX(.78); }
.navbar { position: absolute; left: 1398px; top: 148px; width: 35px; height: 330px; background: #f5f5f5; border: 1px solid #bcbcbc; border-left-width: 2px; border-bottom-width: 2px; border-radius: 4px; display: flex; flex-direction: column; align-items: center; }
.nv-x { width: 8px; height: 8px; align-self: flex-end; margin: 4px 2px 3px 0; }
.nv-wheel { width: 24px; height: 24px; margin-top: 5px; }
.nv-c { margin-top: 7px; }
.nv-sep { width: 26px; height: 1px; background: #ccc; margin-top: 3px; }
.nv { width: 28px; height: 28px; flex: none; display: flex; align-items: center; justify-content: center; }
.nv svg { width: 18px; height: 18px; }
.nv.sel { background: #d3e3f3; margin-top: 2px; }
.nv-fill { flex: 1; }

.bearing { position: absolute; left: 635px; top: 75px; }
.scale { position: absolute; left: 449px; top: 697px; width: 536px; display: flex; flex-direction: column; align-items: center; }
.bracket { width: 100%; height: 11px; border: 1px solid #444; border-top: 0; }
.scale span { font: 14px/16px "Liberation Sans", sans-serif; color: #333; margin-top: 7px; }
.brand { position: absolute; left: 14px; top: 705px; display: flex; flex-direction: column; font: 11.500px/13px "Liberation Sans", sans-serif; color: #333; }
.brand strong { color: #222; }
.brand sup { font-size: 5px; line-height: 0; }
.axes { position: absolute; left: 1344px; top: 610px; width: 60px; height: 60px; }
.ax-y { position: absolute; left: 0; top: 0; width: 1px; height: 57px; background: #000; }
.ax-x { position: absolute; left: 0; top: 56px; width: 58px; height: 2px; background: #777; }
.ax-red { position: absolute; left: 0; top: 34px; width: 23px; height: 23px; background: #f00; }
.axes span { position: absolute; font: 16px/16px "Liberation Sans", sans-serif; color: #111; }
.a-y { left: 2px; top: 0; }
.a-z { left: 2px; top: 42px; }
.a-x { left: 47px; top: 43px; }
.zeros { position: absolute; left: 1416px; top: 688px; display: flex; flex-direction: column; font: 14px/16px "Liberation Sans", sans-serif; color: #333; }

.strip { flex: 1; display: flex; background: #eee; border-top: 1px solid #ddd; }
.doc-tab { width: 150px; height: 25px; margin-top: 4px; background: #fff; display: flex; align-items: center; padding-left: 4px; font: 11px/16px "Liberation Mono", monospace; letter-spacing: -.6px; color: #111; white-space: nowrap; }
.doc-tab span { margin-left: 3px; width: 114px; }
.tabx { width: 15px; height: 15px; }
.strip-rest { flex: 1; margin-top: 5px; border-top: 1px solid #000; }

/* Status */
.status { height: 24px; display: flex; align-items: center; padding-bottom: 2px; background: linear-gradient(#f2f2f2, #bdbdbd); border-top: 1px solid #999; color: #444; }
.ready { flex: 1; }
.st-log { width: 17px; height: 17px; }
.st-logs { margin-left: 5px; width: 38px; }
.st-mode { border-left: 1px solid #aaa; height: 21px; line-height: 20px; padding-left: 5px; width: 204px; white-space: nowrap; color: #333; }
```
